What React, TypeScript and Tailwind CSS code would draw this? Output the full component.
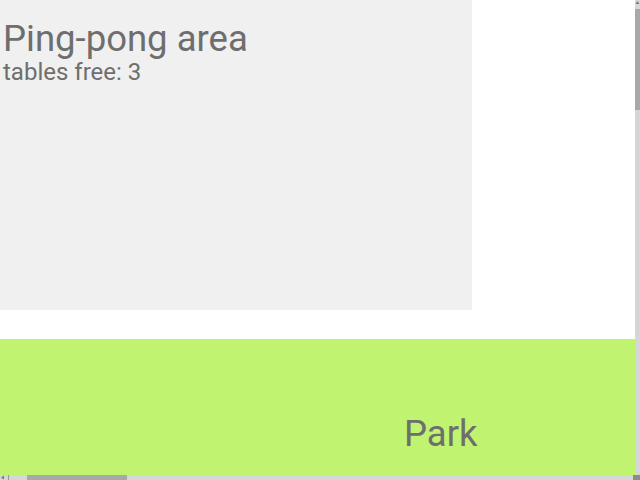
import React from 'react';

function Arrow({dir}: {dir: 'up' | 'left'}) {
    return (
        <svg width="5" height="5" viewBox="0 0 5 5" className="block">
            {dir === 'up'
                ? <polygon points="2.5,1 4.5,4 0.5,4" fill="#7a7a7a"/>
                : <polygon points="1,2.5 4,0.5 4,4.5" fill="#7a7a7a"/>}
        </svg>
    );
}

export default function App() {
    return (
        <div className="h-screen w-screen overflow-hidden flex flex-col bg-white font-['Roboto',sans-serif] text-[#6e6e6e]">
            <div className="flex flex-1 min-h-0">
                <main className="flex-1 overflow-hidden">
                    <section className="w-[472px] h-[310px] bg-[#f0f0f0] pl-[3px] pt-[21px]">
                        <h1 className="text-[36.5px] leading-none">Ping-pong area</h1>
                        <p className="text-[24px] leading-none mt-[2px]">tables free: 3</p>
                    </section>
                    <section className="mt-[29px] h-[600px] bg-[#c0f470] pl-[404px] pt-[77px]">
                        <h2 className="text-[36.5px] leading-none">Park</h2>
                    </section>
                </main>
                <div className="w-[5px] flex flex-col bg-[#d6d6d6]">
                    <div className="h-[9px] flex flex-col items-center">
                        <Arrow dir="up"/>
                    </div>
                    <div className="h-[101px] bg-[#a8a8a8]"/>
                </div>
            </div>
            <div className="h-[5px] flex bg-[#d6d6d6]">
                <div className="w-[9px] flex">
                    <Arrow dir="left"/>
                    <div className="w-[1px] ml-[3px] bg-[#9a9a9a]"/>
                </div>
                <div className="w-[18px]"/>
                <div className="w-[100px] bg-[#a8a8a8]"/>
                <div className="flex-1"/>
                <div className="w-[7px] bg-[#8c8c8c]"/>
            </div>
        </div>
    );
}
